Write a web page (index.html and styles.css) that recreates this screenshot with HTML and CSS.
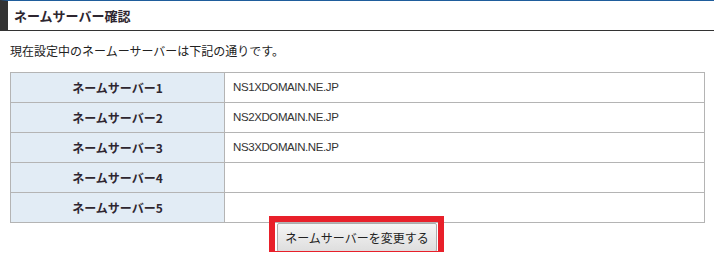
FILE: index.html
```html
<!DOCTYPE html>
<html lang="ja">
<head>
<meta charset="utf-8">
<title>ネームサーバー確認</title>
<link rel="stylesheet" href="styles.css">
</head>
<body>
<div class="page">
  <h2 class="heading">ネームサーバー確認</h2>
  <p class="lead">現在設定中のネームーサーバーは下記の通りです。</p>
  <table class="ns-table">
    <tr><th>ネームサーバー1</th><td>NS1XDOMAIN.NE.JP</td></tr>
    <tr><th>ネームサーバー2</th><td>NS2XDOMAIN.NE.JP</td></tr>
    <tr><th>ネームサーバー3</th><td>NS3XDOMAIN.NE.JP</td></tr>
    <tr><th>ネームサーバー4</th><td></td></tr>
    <tr><th>ネームサーバー5</th><td></td></tr>
  </table>
  <div class="actions">
    <span class="btn-wrap">
      <button class="btn" type="button">ネームサーバーを変更する</button>
      <span class="highlight"></span>
    </span>
  </div>
</div>
</body>
</html>
```
FILE: styles.css
```css
html, body {
  margin: 0;
  padding: 0;
  background: #ffffff;
}
body {
  font-family: "Noto Sans CJK JP", "Liberation Sans", sans-serif;
  color: #222222;
  overflow: hidden;
}
.page {
  width: 714px;
}
.heading {
  margin: 0;
  height: 29px;
  display: flex;
  align-items: center;
  padding-left: 6px;
  border-top: 1px solid #1f5d9c;
  border-left: 8px solid #333333;
  border-bottom: 1px solid #333333;
  font-size: 13px;
  font-weight: bold;
  color: #2e2630;
  line-height: 1;
}
.lead {
  margin: 12px 0 0 10px;
  font-size: 12px;
  line-height: 15px;
  height: 15px;
}
.ns-table {
  margin: 14px 0 0 10px;
  width: 695px;
  border-collapse: collapse;
  font-size: 12px;
}
.ns-table th,
.ns-table td {
  border: 1px solid #b4b4b4;
  height: 29px;
  padding: 0;
  line-height: 15px;
}
.ns-table th {
  width: 213px;
  background: #e2ecf5;
  font-weight: bold;
  color: #2e2630;
  text-align: center;
}
.ns-table td {
  padding-left: 8px;
  font-family: "Liberation Sans", sans-serif;
  font-size: 11.5px;
  letter-spacing: -0.4px;
  color: #333333;
}
.actions {
  width: 714px;
  display: flex;
  justify-content: center;
}
.btn-wrap {
  position: relative;
  display: inline-block;
}
.btn {
  display: block;
  width: 160px;
  height: 29px;
  padding: 0;
  border: 1px solid #acacac;
  border-radius: 2px;
  background: linear-gradient(#f5f5f5, #dedede);
  font-family: "Noto Sans CJK JP", sans-serif;
  font-size: 12px;
  color: #222222;
}
.highlight {
  position: absolute;
  left: -8px;
  top: -7px;
  width: 175px;
  height: 41px;
  box-sizing: border-box;
  border: 6px solid #e8202a;
}
```
